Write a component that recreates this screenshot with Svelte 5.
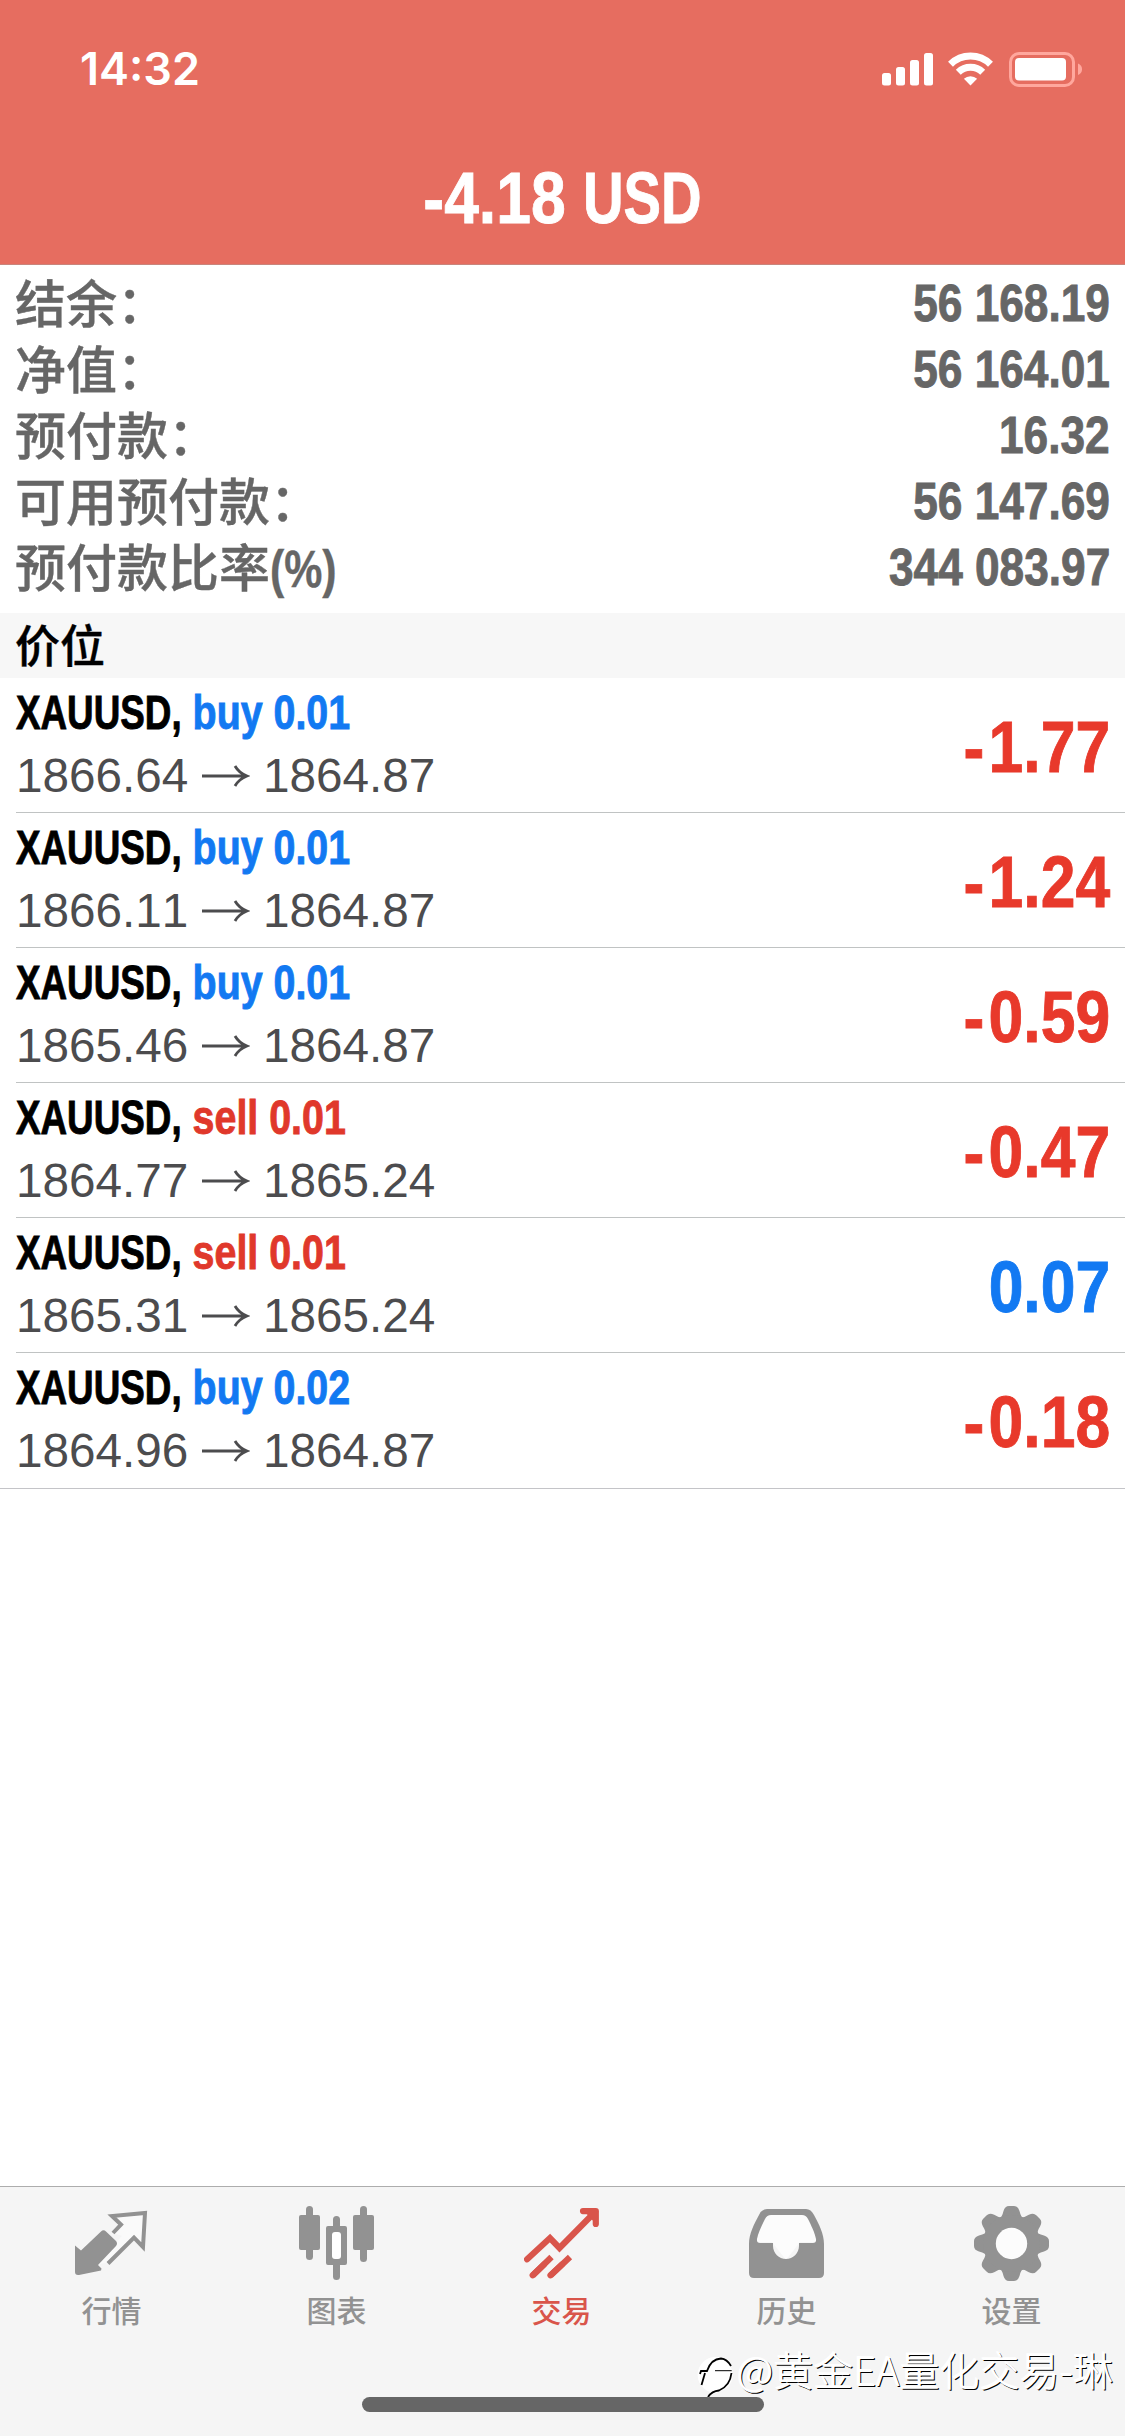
<script lang="ts">
	type Position = {
		symbol: string;
		side: 'buy' | 'sell';
		volume: string;
		open: string;
		current: string;
		profit: string;
	};

	const summary = [
		{ label: '结余：', value: '56 168.19' },
		{ label: '净值：', value: '56 164.01' },
		{ label: '预付款：', value: '16.32' },
		{ label: '可用预付款：', value: '56 147.69' },
		{ label: '预付款比率', unit: '(%)', value: '344 083.97' }
	];

	const positions: Position[] = [
		{ symbol: 'XAUUSD', side: 'buy', volume: '0.01', open: '1866.64', current: '1864.87', profit: '-1.77' },
		{ symbol: 'XAUUSD', side: 'buy', volume: '0.01', open: '1866.11', current: '1864.87', profit: '-1.24' },
		{ symbol: 'XAUUSD', side: 'buy', volume: '0.01', open: '1865.46', current: '1864.87', profit: '-0.59' },
		{ symbol: 'XAUUSD', side: 'sell', volume: '0.01', open: '1864.77', current: '1865.24', profit: '-0.47' },
		{ symbol: 'XAUUSD', side: 'sell', volume: '0.01', open: '1865.31', current: '1865.24', profit: '0.07' },
		{ symbol: 'XAUUSD', side: 'buy', volume: '0.02', open: '1864.96', current: '1864.87', profit: '-0.18' }
	];

	const tabs = [
		{ id: 'quotes', label: '行情' },
		{ id: 'chart', label: '图表' },
		{ id: 'trade', label: '交易' },
		{ id: 'history', label: '历史' },
		{ id: 'settings', label: '设置' }
	];

	let active = $state('trade');
</script>

<div class="screen">
	<header>
		<div class="status">
			<span class="time">14:32</span>
			<svg width="202" height="36" viewBox="0 0 202 36" fill="#fff">
				<rect x="2" y="22" width="9" height="12.500" rx="2.500" />
				<rect x="16" y="16" width="9" height="18.500" rx="2.500" />
				<rect x="30" y="9" width="9" height="25.500" rx="2.500" />
				<rect x="44" y="2" width="9" height="32.500" rx="2.500" />
				<g fill="none" stroke="#fff" stroke-width="7">
					<path d="M70.500 13.200 A28.500 28.500 0 0 1 110.500 13.200" />
					<path d="M78.300 21.300 A17.500 17.500 0 0 1 102.700 21.300" />
				</g>
				<path d="M90.500 34.500 L83.900 27.800 A9.500 9.500 0 0 1 97.100 27.800 Z" />
				<rect x="130.500" y="2.500" width="63" height="32" rx="8.500" fill="none" stroke="#ffa79d" stroke-width="3" />
				<rect x="135" y="7" width="51" height="22.500" rx="4" />
				<path d="M198 12.500 Q202 14 202 18.300 Q202 22.500 198 24 Z" fill="#ffa79d" />
			</svg>
		</div>
		<h1><span class="amount">-4.18 <span class="currency">USD</span></span></h1>
	</header>

	<dl class="summary">
		{#each summary as item}
			<div class="line">
				<dt>{item.label}{#if item.unit}<span class="unit">{item.unit}</span>{/if}</dt>
				<dd>{item.value}</dd>
			</div>
		{/each}
	</dl>

	<h2>价位</h2>

	<ul class="positions">
		{#each positions as p}
			<li>
				<div class="row">
					<div class="info">
						<div class="deal"><span class="symbol">{p.symbol},</span> <span class={p.side}>{p.side} {p.volume}</span></div>
						<div class="prices">
							{p.open}
							<svg width="48" height="24" viewBox="0 0 48 24" fill="none" stroke="currentColor" stroke-width="2.800">
								<path d="M0 12 H44 M33 2 Q37 9 45 12 Q37 15 33 22" />
							</svg>
							{p.current}
						</div>
					</div>
					<div class="profit" class:loss={p.profit.startsWith('-')}>{p.profit}</div>
				</div>
			</li>
		{/each}
	</ul>

	<nav>
		{#each tabs as tab}
			<button class:active={active === tab.id} onclick={() => (active = tab.id)}>
				<svg width="75" height="75" viewBox="0 0 75 75" fill="currentColor">
					{#if tab.id === 'quotes'}
						<path d="M24 58 L39 39 L48 30 L39 27 L47 18.500 L38 10 L71 7 L69 41 L60 31.500 L35 56.500 Z" fill="#fafafa" />
						<path d="M27 25.500 Q29.500 23 32 25.500 L42 35 Q44 37.500 42 40 L24 59 L27.500 62.500 L27 64.500 L5 69 Q1 69.500 1 66 V39.500 L7 44.500 Z" />
						<path d="M39 27 L47 18.500 L38 10 L71 7 L69 41 L60 31.500 L34 57.500" fill="none" stroke="currentColor" stroke-width="4" />
					{:else if tab.id === 'chart'}
						<rect x="0" y="9" width="21" height="35" rx="2" />
						<rect x="7" y="0" width="7" height="54" rx="3.500" />
						<rect x="54" y="9" width="21" height="35" rx="2" />
						<rect x="61" y="0" width="7" height="56" rx="3.500" />
						<path d="M34 20 V13.500 A3.500 3.500 0 0 1 41 13.500 V20 H46 Q48 20 48 22 V57 Q48 59 46 59 H41 V70.500 A3.500 3.500 0 0 1 34 70.500 V59 H29 Q27 59 27 57 V22 Q27 20 29 20 Z" />
						<rect x="33" y="26" width="9" height="27" rx="3" fill="#fff" />
					{:else if tab.id === 'trade'}
						<g fill="none" stroke="currentColor" stroke-width="6.200" stroke-linecap="round">
							<path d="M3.100 53.300 L26 32 L35.500 42 L71 6" />
							<path d="M59 5.100 H71.800 V18" stroke-linejoin="round" />
							<path d="M8.700 69.500 L27.500 51 M26.500 69.500 L46 51" stroke-linecap="butt" />
							<path d="M8.700 69.300 L20 58.500 M26.500 69.300 L38 58.500" />
						</g>
						<path d="M60 5 L72 5 L72 18 Z" />
					{:else if tab.id === 'history'}
						<path d="M15 8 H60 L68 36 H51 L37 54 L23 36 H7 Z" fill="#fcfcfc" />
						<path fill-rule="evenodd" d="M18 3 H57 Q62 3 65 9 C70 18 75 28 75 38 V67 Q75 72 70 72 H5 Q0 72 0 67 V38 C0 28 5 18 10 9 Q13 3 18 3 Z M22 9 Q18 9 16 13 C13 19 9 27 8 33 Q7.500 37 11 37 H24 V40 C24 47 30 53 37 53 C44 53 50 47 50 40 V37 H64 Q67.500 37 67 33 C66 27 62 19 59 13 Q57 9 53 9 Z" />
					{:else}
						{#each [0, 45, 90, 135, 180, 225, 270, 315] as angle}
							<path transform="rotate({angle} 37.5 37.5)" d="M24 14 Q28 12 29.500 5 Q31 0 35 0 H40 Q44 0 45.500 5 Q47 12 51 14 L37.500 30 Z" />
						{/each}
						<circle cx="37.500" cy="37.500" r="22" fill="none" stroke="currentColor" stroke-width="13" />
						<circle cx="37.500" cy="37.500" r="15.700" fill="#fcfcfc" />
					{/if}
				</svg>
				<span>{tab.label}</span>
			</button>
		{/each}
	</nav>

	<div class="home"></div>

	<div class="watermark">
		<svg width="44" height="54" viewBox="0 0 44 54">
			<path d="M21 11 A18 18 0 0 1 36 40 Q28 46 20 48 L15 52 L17 46 A18 18 0 0 1 21 11 Z" fill="#fff" />
			<g fill="none" stroke="#000" stroke-width="1.800">
				<path d="M7 28 L8 25 H14 Q18 13 28 12.500 Q34 13 38 20" />
				<path d="M38.500 27 Q37 40 26 44.500 Q19 45 15 51" />
				<path d="M12 27 L8.500 39" />
				<path d="M22 24.700 H38.700" stroke-width="1" />
			</g>
		</svg>
		<span>@黄金EA量化交易-琳</span>
	</div>
</div>

<style>
	:global(body) {
		background: #fff;
	}

	.screen {
		position: relative;
		display: flex;
		flex-direction: column;
		width: 1125px;
		height: 2436px;
		overflow: hidden;
		background: #fff;
		font-family: 'Liberation Sans', 'Noto Sans CJK SC', sans-serif;
		font-kerning: none;
	}

	header {
		box-sizing: border-box;
		height: 265px;
		padding-top: 44px;
		background: #e66d60;
		border-bottom: 1px solid #c9857c;
		color: #fff;
	}

	.status {
		display: flex;
		justify-content: space-between;
		padding: 7px 43px 0 80px;
	}

	.time {
		font: 600 45px/36px Inter, sans-serif;
	}

	h1 {
		display: flex;
		justify-content: center;
		margin: 67px 0 0;
		font-size: 72px;
		line-height: 88px;
	}

	/* condensed face */
	.amount,
	dd,
	.deal,
	.profit {
		font-weight: bold;
		-webkit-text-stroke: 0.9px currentColor;
		transform: scaleX(0.867);
	}

	.amount {
		margin-right: -14px;
	}

	.currency {
		display: inline-block;
		transform: scaleX(0.9);
		transform-origin: left;
	}

	.summary {
		height: 344px;
		margin: 0;
		padding: 4px 15px 0;
		box-sizing: border-box;
		color: #666;
	}

	.line {
		display: flex;
		justify-content: space-between;
		height: 66px;
		font-size: 51px;
		line-height: 64px;
	}

	dt {
		font-family: 'Noto Sans CJK SC', sans-serif;
		font-weight: 500;
		-webkit-text-stroke: 0.4px currentColor;
	}

	.unit {
		display: inline-block;
		font-family: 'Liberation Sans', sans-serif;
		font-weight: bold;
		transform: scaleX(0.84);
		transform-origin: left;
	}

	dd {
		margin: 0;
		line-height: 70px;
		transform-origin: right;
	}

	h2 {
		margin: 4px 0 0;
		padding-left: 15px;
		height: 65px;
		background: #f7f7f7;
		font: 500 45px/61px 'Noto Sans CJK SC', sans-serif;
		-webkit-text-stroke: 0.4px currentColor;
	}

	.positions {
		flex: 1;
		margin: 0;
		padding: 0;
		list-style: none;
	}

	li {
		padding-left: 16px;
	}

	li:last-child {
		padding-left: 0;
		border-bottom: 1px solid #c4c4c8;
	}

	.row {
		display: flex;
		justify-content: space-between;
		align-items: center;
		box-sizing: border-box;
		height: 135px;
		padding-right: 15px;
		border-bottom: 1px solid #c0c3c3;
	}

	li:last-child .row {
		padding-left: 16px;
		border-bottom: 0;
	}

	.deal {
		font-size: 48px;
		line-height: 60px;
		color: #000;
		transform: scaleX(0.82);
		transform-origin: left;
	}

	.symbol {
		display: inline-block;
		margin-right: -14px;
		transform: scaleX(0.935);
		transform-origin: left;
	}

	.buy {
		color: #1279f2;
	}

	.sell {
		color: #e0382b;
	}

	.prices {
		font-size: 47.700px;
		line-height: 65px;
		color: #4c4c4e;
	}

	.prices svg {
		vertical-align: 4px;
	}

	.profit {
		padding-top: 3px;
		font-size: 72px;
		line-height: 88px;
		color: #1279f2;
		transform-origin: right;
	}

	.profit.loss {
		color: #e8392b;
	}

	.profit.loss::first-letter {
		letter-spacing: 5px;
	}

	nav {
		display: flex;
		box-sizing: border-box;
		height: 250px;
		padding-top: 19px;
		background: #f5f5f5;
		border-top: 1px solid #adadad;
	}

	nav button {
		display: flex;
		flex-direction: column;
		align-items: center;
		width: 225px;
		height: 130px;
		margin: 0;
		padding: 0 2px 0 0;
		border: 0;
		background: none;
		color: #929292;
		font: 500 30px/30px 'Noto Sans CJK SC', sans-serif;
	}

	nav button.active {
		color: #d9554b;
	}

	nav span {
		margin-top: 13px;
	}

	.home {
		position: absolute;
		left: 362px;
		top: 2397px;
		width: 402px;
		height: 15px;
		border-radius: 8px;
		background: #666;
	}

	.watermark {
		position: absolute;
		left: 693px;
		top: 2346px;
		display: flex;
		color: #fff;
		font: 300 40px/47px 'Noto Sans CJK SC', sans-serif;
		text-shadow:
			-1px -1px 0 #fff,
			1px 1px 0 #000;
		white-space: nowrap;
	}
</style>
